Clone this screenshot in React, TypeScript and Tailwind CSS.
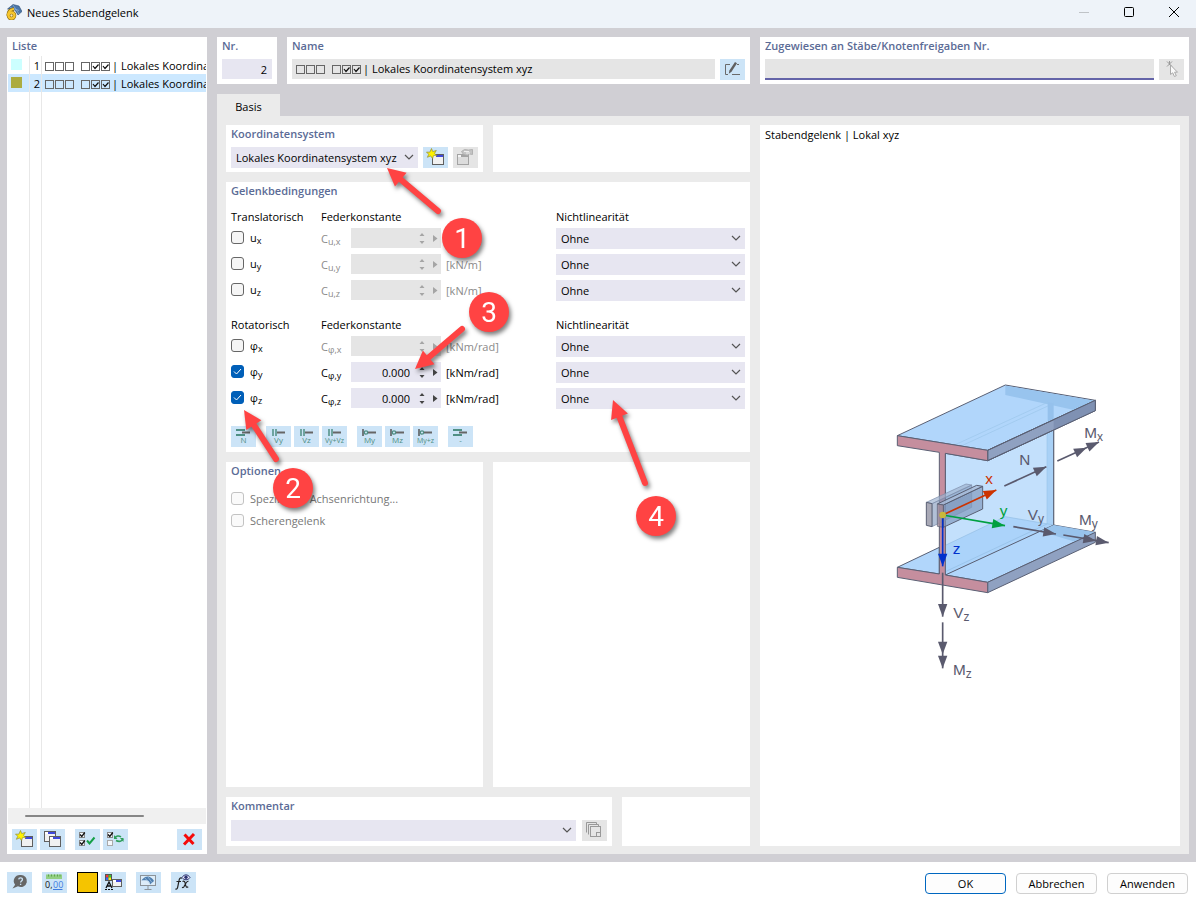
import type { ReactNode } from "react";
import clsx from "clsx";

type Point = [number, number];

const SLATE = "#5a5a6e";

/* ---------- Small icons, all drawn on a 25 x 21 button face ---------- */

const Glyph = ({ children }: { children: ReactNode }) => (
  <svg width="25" height="21" viewBox="0 0 25 21" fill="none" aria-hidden="true">
    {children}
  </svg>
);

const MiniWindow = ({ x, y, w = 11, h = 10, muted = false }: { x: number; y: number; w?: number; h?: number; muted?: boolean }) => (
  <g>
    <rect x={x + 0.5} y={y + 0.5} width={w - 1} height={h - 1} fill={muted ? "#dcdcdc" : "#f1f1f1"} stroke={muted ? "#a3a3a3" : "#5f5f5f"} />
    <rect x={x + 1} y={y + 1} width={w - 2} height="2" fill={muted ? "#f4f4f4" : "#fff"} />
    <rect x={x + 4} y={y + 1} width={w - 5} height="2" fill={muted ? "#a3a3a3" : "#3f49dc"} />
  </g>
);

const NewIcon = () => (
  <Glyph>
    <MiniWindow x={9} y={7} w={12} h={11} />
    <path d="M8.5 1.5l1.2 3 3.6-1-1.8 2.9 2.5 2.4-3.5-.2-.9 2.9-2-2.6-3.2 1.4 1.3-3-2.2-2.2 3.3.1z" fill="#fff200" stroke="#8d8d3c" strokeWidth="0.7" />
  </Glyph>
);

const CopyIcon = () => (
  <Glyph>
    <MiniWindow x={4} y={2} w={12} h={11} />
    <MiniWindow x={9} y={7} w={12} h={11} />
  </Glyph>
);

const EditWindowIcon = () => (
  <Glyph>
    <MiniWindow x={4} y={7} w={12} h={11} muted />
    <path d="M8.500 4.500l3-2 4 .5 4-.5v5l-3-.5-2 1.500-4-1z" fill="#c4c4c4" stroke="#a8a8a8" strokeWidth="0.800" />
    <path d="M11 4.500h5M13 6h4" stroke="#eee" />
  </Glyph>
);

const TickBox = ({ x, y, ticked }: { x: number; y: number; ticked?: boolean }) => (
  <g>
    <rect x={x + 0.5} y={y + 0.5} width="5" height="5" fill="#f4f8fc" stroke={ticked ? "#8a8a8a" : "#aaa"} />
    {ticked && <path d={`M${x + 1} ${y + 2.5}l1.800 2 3-4`} stroke="#111" strokeWidth="1.300" />}
  </g>
);

const SelectAllIcon = () => (
  <Glyph>
    <TickBox x={4} y={3} ticked />
    <TickBox x={4} y={11} ticked />
    <path d="M12 11.500l2.500 3 5-6" stroke="#15a048" strokeWidth="2" />
  </Glyph>
);

const InvertIcon = () => (
  <Glyph>
    <TickBox x={4} y={3} ticked />
    <TickBox x={4} y={11} />
    <path d="M12 9c1-2.500 4-2.500 6-1.200" stroke="#2e9e5b" strokeWidth="1.600" />
    <path d="M20 10c-1 2.500-4 3-7 1.500" stroke="#2e9e5b" strokeWidth="1.600" />
    <path d="M11 6v4h3.500zM20.500 13V9H17z" fill="#2e9e5b" />
  </Glyph>
);

const DeleteIcon = () => (
  <Glyph>
    <path d="M7.500 5.500l9 9.500M17 5l-10 10.500" stroke="#f50a0a" strokeWidth="3" />
  </Glyph>
);

const HelpIcon = () => (
  <Glyph>
    <path d="M13.500 3a6 6 0 1 1-2.500 11.200L5.500 16.500l2.600-3.800A6 6 0 0 1 13.500 3z" fill="#666" />
    <path d="M11.700 7.400c.2-2.200 3.900-2 3.700.2-.1 1.300-1.800 1.400-1.800 2.900M13.600 11.800v1.300" stroke="#cce4f7" strokeWidth="1.300" />
  </Glyph>
);

const UnitsIcon = () => (
  <Glyph>
    <rect x="4" y="2.500" width="16" height="4.500" fill="#92cf83" />
    <path d="M6.500 2.500v2M9.500 2.500v2M12.500 2.500v2M15.500 2.500v2M18 2.500v2" stroke="#5da24e" />
    <text x="3" y="16" fontSize="9" fill="#111">0,</text>
    <text x="11" y="16" fontSize="9" fill="#3d7be0">00</text>
    <path d="M11 17.500h9.500" stroke="#3d7be0" />
  </Glyph>
);

const DisplayIcon = () => (
  <Glyph>
    <rect x="4" y="2" width="7" height="7" fill="#555" />
    <rect x="5" y="3" width="2.500" height="2.500" fill="#f33" />
    <rect x="7.500" y="3" width="2.500" height="2.500" fill="#3c3" />
    <rect x="5" y="5.500" width="2.500" height="2.500" fill="#36f" />
    <rect x="7.500" y="5.500" width="2.500" height="2.500" fill="#fe0" />
    <path d="M5 16l3-6 3 6M6 14h4" stroke="#111" strokeWidth="1.300" />
    <path d="M4 17.500h8" stroke="#111" strokeDasharray="2 1" />
    <MiniWindow x={11} y={7} w={10} h={8} />
  </Glyph>
);

const ScreenIcon = () => (
  <Glyph>
    <rect x="4.500" y="3.500" width="15" height="10" fill="#dcecf8" stroke="#8c9399" />
    <path d="M5.500 8.500C8 5 10 4.500 12.500 4.500c2.500.5 4.500 2.500 5.500 4.500l-4 3.500c0-2-1-3.500-2.500-4-2-.5-4-.5-6 0z" fill="#4f7fb0" />
    <path d="M9 6l5 6M12 5l4 5.500" stroke="#b9d3ea" strokeWidth="0.600" />
    <path d="M12 14v3M8.500 17.500h7" stroke="#8c9399" />
  </Glyph>
);

const FormulaIcon = () => (
  <Glyph>
    <path d="M11 6.200c-2-1-2.700.6-3 2.500l-1.300 6.500c-.3 1.500-1 2.300-2.200 1.700M5.500 9.500h4.500" stroke="#222" strokeWidth="1.200" />
    <path d="M11.500 9.500c2-1 2.500.5 3 3s1 3.500 2.700 2.200M17.500 9.300c-2-.5-3.500 3.500-4.500 5.500-.5.800-1 1-2 .5" stroke="#222" strokeWidth="1.200" />
    <path d="M11 5.500c2-3.500 6-3.500 8 0-2 3-6 3-8 0z" fill="#eef" stroke="#2b3270" />
    <circle cx="15" cy="5.300" r="1.700" fill="#2b3270" />
  </Glyph>
);

const RenameIcon = () => (
  <Glyph>
    <path d="M10 5.500H5.500v10H8M12 15.500h8M17 5.500h2" stroke="#6a6a6a" />
    <path d="M15 3l2 1.300-5.500 8.500-2.700 2 .6-3.200z" fill="#5f5f5f" />
  </Glyph>
);

const PickIcon = () => (
  <Glyph>
    <path d="M8 2.500l5 5M13 2.500l-5 5M10.500 2v4" stroke="#999" />
    <path d="M11.500 6v9.500l2.200-1.700 1.700 3.700 1.900-.8-1.700-3.500h2.900z" fill="#fafafa" stroke="#aaa" />
  </Glyph>
);

const StackIcon = () => (
  <Glyph>
    <path d="M4.500 12.500v-10h10v2M6.500 14.500v-10h10v2" stroke="#999" />
    <rect x="8.500" y="6.500" width="10" height="10" stroke="#999" />
    <rect x="14.500" y="12.500" width="4" height="4" stroke="#999" />
  </Glyph>
);

type HingeKind = "axial" | "shear" | "moment";

const HingeIcon = ({ kind, text }: { kind: HingeKind; text: string }) => (
  <Glyph>
    {kind === "axial" && (
      <>
        <path d="M5 4h9M5 9h9" stroke="#4f8f84" strokeWidth="2" />
        <path d="M11 6.500h8" stroke="#666" strokeWidth="2" />
      </>
    )}
    {kind === "shear" && (
      <>
        <path d="M7 3v7M10 3v7" stroke="#4f8f84" strokeWidth="1.500" />
        <path d="M11 6.500h8" stroke="#666" strokeWidth="2" />
      </>
    )}
    {kind === "moment" && (
      <>
        <path d="M6 3v7" stroke="#555" strokeWidth="1.500" />
        <circle cx="9" cy="6.500" r="1.700" stroke="#4f8f84" strokeWidth="1.300" />
        <path d="M11 6.500h8" stroke="#666" strokeWidth="2" />
      </>
    )}
    <text x="12.500" y="17" textAnchor="middle" fontSize={text.length > 3 ? 7 : 8} fill="#4f8f84">
      {text}
    </text>
  </Glyph>
);

/* ---------- Building blocks ---------- */

const IconButton = ({ label, disabled, children }: { label: string; disabled?: boolean; children: ReactNode }) => (
  <button type="button" aria-label={label} title={label} disabled={disabled} className={clsx("h-[21px] w-[25px] shrink-0", disabled ? "bg-[#e5e5e5]" : "bg-[#cce4f7]")}>
    {children}
  </button>
);

const Panel = ({ className, children }: { className?: string; children?: ReactNode }) => (
  <section className={clsx("bg-white px-[5px]", className)}>{children}</section>
);

const Title = ({ htmlFor, children }: { htmlFor?: string; children: ReactNode }) =>
  htmlFor ? (
    <label htmlFor={htmlFor} className="block h-[19px] truncate font-semibold leading-[18px] text-[#5b6b96]">{children}</label>
  ) : (
    <h2 className="h-[19px] truncate font-semibold leading-[18px] text-[#5b6b96]">{children}</h2>
  );

const Dropdown = ({ id, label, options, className }: { id?: string; label?: string; options: string[]; className?: string }) => (
  <div className={clsx("relative h-[21px] bg-[#e7e6f1]", className)}>
    <select id={id} aria-label={label} className="h-full w-full appearance-none pl-[5px] pr-5 outline-none">
      {options.map((o) => (
        <option key={o}>{o}</option>
      ))}
    </select>
    <svg width="10" height="6" viewBox="0 0 10 6" fill="none" className="pointer-events-none absolute right-1 top-[7px]">
      <path d="M1 1l4 4 4-4" stroke="#555" strokeWidth="1.200" />
    </svg>
  </div>
);

const CheckBox = ({ checked, disabled, children }: { checked?: boolean; disabled?: boolean; children: ReactNode }) => (
  <label className={clsx("flex h-[19px] items-center gap-[6px] self-start", disabled && "text-[#777]")}>
    <span className="grid size-[13px] shrink-0">
      <input
        type="checkbox"
        defaultChecked={checked}
        disabled={disabled}
        className="peer col-start-1 row-start-1 size-[13px] appearance-none rounded-[3px] border border-[#666] bg-[#f5f5f5] checked:border-[#005fb8] checked:bg-[#005fb8] disabled:border-[#c3c3c3] disabled:bg-[#fafafa]"
      />
      <svg width="13" height="13" viewBox="0 0 13 13" fill="none" className="pointer-events-none invisible col-start-1 row-start-1 peer-checked:visible">
        <path d="M3 6.500l2.500 2.500L10 4" stroke="#fff" />
      </svg>
    </span>
    {children}
  </label>
);

/* Three free, one free, two hinged: the pattern that heads every hinge name */
const HingePattern = () => (
  <svg width="66" height="9" viewBox="0 0 66 9" fill="none" className="shrink-0" aria-hidden="true">
    {[0, 10, 20, 36, 46, 56].map((x) => (
      <rect key={x} x={x + 0.5} y="0.500" width="8" height="8" stroke="#666" />
    ))}
    <path d="M48 4l2 2.500 3.500-4M58 4l2 2.500 3.500-4" stroke="#111" strokeWidth="1.200" />
  </svg>
);

const Spinner = ({ label, value, disabled }: { label: string; value: string; disabled?: boolean }) => {
  const fill = disabled ? "#a5a5a5" : "#444";
  return (
    <div className={clsx("flex h-5 w-[90px] self-start", disabled ? "bg-[#e5e5e5]" : "bg-[#e7e6f1]")}>
      <input aria-label={label} defaultValue={value} disabled={disabled} className="h-5 w-[64px] bg-transparent pr-[5px] text-right outline-none" />
      <div className="flex w-[14px] flex-col justify-center gap-[5px]">
        <button type="button" aria-label={`${label} erhöhen`} disabled={disabled}>
          <svg width="14" height="3" viewBox="0 0 14 3"><path d="M7 0l2.500 3h-5z" fill={fill} /></svg>
        </button>
        <button type="button" aria-label={`${label} verringern`} disabled={disabled}>
          <svg width="14" height="3" viewBox="0 0 14 3"><path d="M7 3L4.500 0h5z" fill={fill} /></svg>
        </button>
      </div>
      <button type="button" aria-label={`${label} Optionen`} disabled={disabled} className="w-3">
        <svg width="12" height="7" viewBox="0 0 12 7"><path d="M4 0l4.500 3.500L4 7z" fill={fill} /></svg>
      </button>
    </div>
  );
};

/* ---------- Hinge conditions ---------- */

type Dof = { base: string; axis: string; unit: string; value?: string };

const translations: Dof[] = [
  { base: "u", axis: "x", unit: "[kN/m]" },
  { base: "u", axis: "y", unit: "[kN/m]" },
  { base: "u", axis: "z", unit: "[kN/m]" },
];

const rotations: Dof[] = [
  { base: "φ", axis: "x", unit: "[kNm/rad]" },
  { base: "φ", axis: "y", unit: "[kNm/rad]", value: "0.000" },
  { base: "φ", axis: "z", unit: "[kNm/rad]", value: "0.000" },
];

const DofGroup = ({ title, items }: { title: string; items: Dof[] }) => (
  <div className="flex flex-col gap-px">
    <div className="grid h-5 grid-cols-[90px_235px_1fr] items-center">
      <span>{title}</span>
      <span>Federkonstante</span>
      <span>Nichtlinearität</span>
    </div>
    <div className="flex flex-col gap-[6px]">
      {items.map(({ base, axis, unit, value }) => (
        <div key={axis} className="grid h-5 grid-cols-[90px_30px_95px_110px_1fr] items-center">
          <CheckBox checked={!!value}>
            <span>{base}<sub className="text-[9px]">{axis}</sub></span>
          </CheckBox>
          <span className={clsx(!value && "text-[#8a8a8a]")}>C<sub className="text-[9px]">{base},{axis}</sub></span>
          <Spinner label={`C ${base},${axis}`} value={value ?? ""} disabled={!value} />
          <span className={clsx(!value && "text-[#8a8a8a]")}>{unit}</span>
          <Dropdown label={`Nichtlinearität ${base}${axis}`} options={["Ohne"]} className="self-start" />
        </div>
      ))}
    </div>
  </div>
);

const presets: { kind: HingeKind; text: string }[][] = [
  [{ kind: "axial", text: "N" }],
  [{ kind: "shear", text: "Vy" }, { kind: "shear", text: "Vz" }, { kind: "shear", text: "Vy+Vz" }],
  [{ kind: "moment", text: "My" }, { kind: "moment", text: "Mz" }, { kind: "moment", text: "My+z" }],
  [{ kind: "axial", text: "-" }],
];

/* ---------- Beam drawing ---------- */

const Vector = ({ from, to, inner, color = SLATE }: { from: Point; to: Point; inner?: Point; color?: string }) => {
  const angle = (Math.atan2(to[1] - from[1], to[0] - from[0]) * 180) / Math.PI;
  const head = "M0 0L-38 -14V14z";
  return (
    <g fill={color}>
      <line x1={from[0]} y1={from[1]} x2={to[0]} y2={to[1]} stroke={color} strokeWidth="5" />
      <path d={head} transform={`translate(${to[0]} ${to[1]}) rotate(${angle})`} />
      {inner && <path d={head} transform={`translate(${inner[0]} ${inner[1]}) rotate(${angle})`} />}
    </g>
  );
};

const BeamLabel = ({ x, y, text, sub, color = SLATE }: { x: number; y: number; text: string; sub?: string; color?: string }) => (
  <text x={x} y={y} fontSize="46" fill={color}>
    {text}
    {sub && <tspan fontSize="36" dy="9">{sub}</tspan>}
  </text>
);

const BeamDrawing = () => (
  <svg width="240" height="320" viewBox="0 0 720 960" className="font-['Liberation_Sans',Arial,sans-serif]" role="img" aria-label="Stabendgelenk">
    <g stroke="#5a6074" strokeWidth="3" strokeLinejoin="round">
      {/* web */}
      <path d="M196 250L323 272L521 180V465L196 615z" fill="#c3e0fc" />
      <path d="M501 188L521 180V465L501 462z" fill="#a9d1f6" stroke="none" />
      <path d="M501 188V462" stroke="#9cc5ea" strokeWidth="2" />
      <path d="M521 180V465" />
      {/* bottom flange */}
      <path d="M52 592L178 532V612z" fill="#b1d6fb" />
      <path d="M196 526L376 440L521 465L196 615z" fill="#abd3fa" stroke="none" />
      <path d="M196 526L376 440L521 465M196 605L501 462" fill="none" stroke="#93bce3" strokeWidth="2" />
      <path d="M196 615L521 465L646 487L323 637z" fill="#b1d6fb" />
      <path d="M521 465L646 487L585 515L480 484z" fill="#98c3ec" stroke="none" />
      <path d="M323 637L646 487V517L323 668z" fill="#8fa1c1" />
      {/* top flange */}
      <path d="M52 197L376 45L646 91L323 241z" fill="#b1d6fb" />
      <path d="M376 47L643 92L582 120L376 75z" fill="#98c4ee" stroke="none" />
      <path d="M503 97L228 223M521 100L248 226" stroke="#9cc5ea" strokeWidth="2" />
      <path d="M503 97L521 100V148L503 156z" fill="#95c1ec" stroke="none" />
      <path d="M323 241L646 91V122L323 272z" fill="#8fa1c1" />
      <path d="M521 150L646 91V122L521 180z" fill="#7f91b3" stroke="none" />
      <path d="M323 241L646 91V122L323 272z" fill="none" />
      {/* cut section */}
      <path d="M52 197L323 241V272L196 250V615L323 637V668L52 622V592L178 612V247L52 227z" fill="#c58e9e" />
      {/* hinge plates */}
      <path d="M156 401L275 345V412L156 470z" fill="#7e96bb" fillOpacity="0.600" stroke="#7b8ba8" strokeWidth="2" />
      <path d="M139 397L258 342L275 345L156 401z" fill="#9fb3d0" fillOpacity="0.700" stroke="#7b8ba8" strokeWidth="2" />
      <path d="M139 397L156 401V470L139 466z" fill="#a9a9b6" />
      <path d="M190 405L308 349V417L190 472z" fill="#7e96bb" fillOpacity="0.650" />
      <path d="M172 402L290 346L308 349L190 405z" fill="#a8bcd8" fillOpacity="0.800" />
      <path d="M172 402L190 405V472L172 469z" fill="#a08a98" fillOpacity="0.800" strokeWidth="2" />
    </g>
    <Vector from={[188, 435]} to={[349, 360]} color="#cc3300" />
    <Vector from={[188, 435]} to={[375, 467]} color="#00a040" />
    <Vector from={[188, 435]} to={[188, 589]} color="#0030cc" />
    <circle cx="188" cy="435" r="10" fill="#c9b83a" />
    <Vector from={[373, 348]} to={[499, 290]} />
    <Vector from={[532, 273]} to={[657, 216]} inner={[620, 233]} />
    <Vector from={[400, 470]} to={[528, 492]} />
    <Vector from={[550, 495]} to={[686, 518]} inner={[648, 512]} />
    <Vector from={[188, 608]} to={[188, 740]} />
    <Vector from={[188, 757]} to={[188, 895]} inner={[188, 853]} />
    <BeamLabel x={613} y={205} text="M" sub="x" />
    <BeamLabel x={418} y={285} text="N" />
    <BeamLabel x={316} y={343} text="x" color="#cc3300" />
    <BeamLabel x={359} y={437} text="y" color="#00a040" />
    <BeamLabel x={443} y={451} text="V" sub="y" />
    <BeamLabel x={597} y={466} text="M" sub="y" />
    <BeamLabel x={218} y={552} text="z" color="#0030cc" />
    <BeamLabel x={220} y={743} text="V" sub="z" />
    <BeamLabel x={219} y={914} text="M" sub="z" />
  </svg>
);

/* ---------- Numbered callouts over the form ---------- */

const callouts: { n: number; at: Point; tail: Point; tip: Point }[] = [
  { n: 1, at: [236, 113], tail: [212, 86], tip: [161, 43] },
  { n: 2, at: [67, 363], tail: [50, 334], tip: [18, 285] },
  { n: 3, at: [263, 187], tail: [236, 204], tip: [189, 244] },
  { n: 4, at: [430, 391], tail: [419, 358], tip: [387, 275] },
];

const Callouts = () => (
  <svg width="524" height="425" viewBox="0 0 524 425" className="pointer-events-none absolute left-0 top-0 font-[Roboto,Arial,sans-serif] [filter:drop-shadow(2px_3px_2px_rgba(0,0,0,0.5))]">
    {callouts.map(({ n, at, tail, tip }) => {
      const dx = tip[0] - tail[0];
      const dy = tip[1] - tail[1];
      const len = Math.hypot(dx, dy);
      const angle = (Math.atan2(dy, dx) * 180) / Math.PI;
      return (
        <g key={n} fill="#ff4343">
          <line x1={tail[0]} y1={tail[1]} x2={tip[0] - (dx / len) * 14} y2={tip[1] - (dy / len) * 14} stroke="#ff4343" strokeWidth="6" strokeLinecap="round" />
          <path d="M0 0L-18 -9V9z" transform={`translate(${tip[0]} ${tip[1]}) rotate(${angle})`} />
          <circle cx={at[0]} cy={at[1]} r="20" />
          <text x={at[0]} y={at[1] + 10} textAnchor="middle" fontSize="28" fill="#fff">{n}</text>
        </g>
      );
    })}
  </svg>
);

const hinges = [
  { nr: 1, color: "bg-[#ccffff]" },
  { nr: 2, color: "bg-[#acac40]", selected: true },
];

const HingeList = () => (
  <aside className="flex w-[200px] shrink-0 flex-col bg-white">
    <div className="px-[5px]"><Title>Liste</Title></div>
    <div className="flex flex-1 flex-col px-px">
      <ul>
        {hinges.map(({ nr, color, selected }) => (
          <li key={nr}>
            <button type="button" className={clsx("grid h-[18px] w-full grid-cols-[22px_12px_1fr] overflow-hidden text-left", selected && "bg-[#cce8ff]")}>
              <span className="h-full border-r border-[#e8e8e8] pl-[3px] pt-[3px]"><span className={clsx("block size-[11px]", color)} /></span>
              <span className="h-full border-r border-[#e8e8e8] pr-px text-right leading-5">{nr}</span>
              <span className="flex h-5 min-w-0 items-center gap-px overflow-hidden whitespace-nowrap pl-[3px]">
                <HingePattern />
                <span>| Lokales Koordinatensystem xyz</span>
              </span>
            </button>
          </li>
        ))}
      </ul>
      <div className="grid flex-1 grid-cols-[22px_12px_1fr]">
        <span className="border-r border-[#e8e8e8]" />
        <span className="border-r border-[#e8e8e8]" />
      </div>
      <div className="h-4 bg-[#f0f0f0] pl-[17px] pt-[7px]">
        <div className="h-[2px] w-[119px] rounded-full bg-[#868686]" />
      </div>
    </div>
    <div className="flex gap-[3px] px-[5px] pb-1 pt-[5px]">
      <IconButton label="Neu"><NewIcon /></IconButton>
      <IconButton label="Kopieren"><CopyIcon /></IconButton>
      <div className="ml-[7px] flex flex-1 gap-[3px]">
        <IconButton label="Alle auswählen"><SelectAllIcon /></IconButton>
        <IconButton label="Auswahl umkehren"><InvertIcon /></IconButton>
      </div>
      <IconButton label="Löschen"><DeleteIcon /></IconButton>
    </div>
  </aside>
);

const dialogButtons = ["OK", "Abbrechen", "Anwenden"];

const App = () => (
  <div className="flex min-h-screen flex-col bg-white font-['Open_Sans','Noto_Sans',sans-serif] text-[11px] leading-4 text-black">
    <header className="flex h-7 items-start bg-[#eef3f9] pl-[6px]">
      <svg width="16" height="16" viewBox="0 0 16 16" fill="none" className="mt-1">
        <path d="M1.500 5L7 .5l6 1.500 3 5.500-4 3.500-3-5-4-1z" fill="#4c77a8" stroke="#2f4f77" strokeWidth="0.600" />
        <path d="M4 3.500l9 3M7 1l6 9" stroke="#9ec0e0" strokeWidth="0.600" />
        <path d="M8 5C4.500 5.500 2.200 8 2.200 11.500" stroke="#8a6a10" strokeWidth="3.600" />
        <circle cx="5.500" cy="11.500" r="3" fill="#fbe9b0" stroke="#8a6a10" strokeWidth="3.600" />
        <path d="M8 5C4.500 5.500 2.200 8 2.200 11.500" stroke="#f6c62f" strokeWidth="2.200" />
        <circle cx="5.500" cy="11.500" r="3" stroke="#f6c62f" strokeWidth="2.400" />
      </svg>
      <h1 className="ml-[5px] flex-1 leading-[26px]">Neues Stabendgelenk</h1>
      <div className="flex">
        <button type="button" aria-label="Minimieren" disabled className="grid h-6 w-[45px] place-items-center">
          <svg width="10" height="10" viewBox="0 0 10 10"><path d="M0 5.500h10" stroke="#bfc3c7" /></svg>
        </button>
        <button type="button" aria-label="Maximieren" className="grid h-6 w-[45px] place-items-center">
          <svg width="10" height="10" viewBox="0 0 10 10" fill="none"><rect x="0.500" y="0.500" width="9" height="9" rx="1" stroke="#000" /></svg>
        </button>
        <button type="button" aria-label="Schließen" className="grid h-6 w-[45px] place-items-center">
          <svg width="10" height="10" viewBox="0 0 10 10"><path d="M0 0l10 10M10 0L0 10" stroke="#000" /></svg>
        </button>
      </div>
    </header>

    <main className="flex flex-1 gap-[10px] bg-[#d0cfd4] px-[7px] pb-2 pt-[9px]">
      <HingeList />

      <div className="flex min-w-0 flex-1 flex-col">
        {/* Number, name and assignment */}
        <div className="flex gap-[10px]">
          <Panel className="w-[60px] shrink-0 pb-1">
            <Title htmlFor="nr">Nr.</Title>
            <input id="nr" defaultValue="2" className="mt-[3px] block h-5 w-full bg-[#e7e6f1] px-[5px] text-right outline-none" />
          </Panel>
          <Panel className="w-[463px] shrink-0 pb-1">
            <Title htmlFor="name">Name</Title>
            <div className="mt-[3px] flex gap-[5px]">
              <div className="flex h-5 flex-1 items-center gap-px bg-[#e5e5e5] pl-1">
                <HingePattern />
                <input id="name" readOnly value="| Lokales Koordinatensystem xyz" className="min-w-0 flex-1 bg-transparent outline-none" />
              </div>
              <IconButton label="Name bearbeiten"><RenameIcon /></IconButton>
            </div>
          </Panel>
          <Panel className="min-w-0 flex-1 pb-1">
            <Title htmlFor="assigned">Zugewiesen an Stäbe/Knotenfreigaben Nr.</Title>
            <div className="mt-[3px] flex gap-[5px]">
              <input id="assigned" className="h-[21px] min-w-0 flex-1 border-b-2 border-[#6464a8] bg-[#e5e5e5] px-[5px] outline-none" />
              <IconButton label="Auswählen" disabled><PickIcon /></IconButton>
            </div>
          </Panel>
        </div>

        <div role="tablist" className="mt-[10px] flex">
          <button type="button" role="tab" aria-selected="true" className="h-[22px] w-[63px] bg-[#ebebeb] pt-1">Basis</button>
        </div>

        <div className="flex flex-1 gap-[10px] bg-[#ebebeb] px-[9px] pb-2 pt-[9px]">
          <div className="relative flex w-[524px] shrink-0 flex-col gap-[10px]">
            <div className="grid grid-cols-2 gap-[10px]">
              <Panel className="pb-1">
                <Title htmlFor="cs">Koordinatensystem</Title>
                <div className="mt-[3px] flex gap-[5px]">
                  <Dropdown id="cs" options={["Lokales Koordinatensystem xyz"]} className="flex-1" />
                  <IconButton label="Neues Koordinatensystem"><NewIcon /></IconButton>
                  <IconButton label="Koordinatensystem bearbeiten" disabled><EditWindowIcon /></IconButton>
                </div>
              </Panel>
              <Panel />
            </div>

            <Panel className="pb-[5px]">
              <Title>Gelenkbedingungen</Title>
              <div className="mt-[6px] flex flex-col gap-[15px]">
                <DofGroup title="Translatorisch" items={translations} />
                <DofGroup title="Rotatorisch" items={rotations} />
              </div>
              <div className="mt-[18px] flex gap-[10px]">
                {presets.map((group, i) => (
                  <div key={i} className="flex gap-[3px]">
                    {group.map(({ kind, text }) => (
                      <IconButton key={text} label={`Gelenk ${text}`}><HingeIcon kind={kind} text={text} /></IconButton>
                    ))}
                  </div>
                ))}
              </div>
            </Panel>

            <div className="grid flex-1 grid-cols-2 gap-[10px]">
              <Panel>
                <Title>Optionen</Title>
                <div className="mt-2 flex flex-col gap-[3px]">
                  <CheckBox disabled>Spezifische Achsenrichtung...</CheckBox>
                  <CheckBox disabled>Scherengelenk</CheckBox>
                </div>
              </Panel>
              <Panel />
            </div>

            <div className="flex gap-[10px]">
              <Panel className="flex-1 pb-[5px]">
                <Title htmlFor="comment">Kommentar</Title>
                <div className="mt-1 flex gap-[6px]">
                  <Dropdown id="comment" options={[""]} className="flex-1" />
                  <IconButton label="Kommentare" disabled><StackIcon /></IconButton>
                </div>
              </Panel>
              <Panel className="w-[128px]" />
            </div>

            <Callouts />
          </div>

          <Panel className="flex min-w-0 flex-1 flex-col">
            <h2 className="h-5 leading-5">Stabendgelenk | Lokal xyz</h2>
            <div className="flex flex-1 items-center justify-center pl-[60px] pt-[68px]">
              <BeamDrawing />
            </div>
          </Panel>
        </div>
      </div>
    </main>

    <footer className="flex h-[35px] items-start pl-[7px] pr-2 pt-[10px]">
      <div className="flex flex-1 gap-[10px]">
        <IconButton label="Hilfe"><HelpIcon /></IconButton>
        <IconButton label="Einheiten"><UnitsIcon /></IconButton>
        <div className="flex gap-[3px]">
          <button type="button" aria-label="Farbe" className="size-[21px] border border-black bg-[#f5c400]" />
          <IconButton label="Darstellung"><DisplayIcon /></IconButton>
        </div>
        <IconButton label="Ansicht"><ScreenIcon /></IconButton>
        <IconButton label="Formel"><FormulaIcon /></IconButton>
      </div>
      <div className="flex gap-[10px] pt-px">
        {dialogButtons.map((name, i) => (
          <button key={name} type="button" className={clsx("h-[21px] w-[81px] rounded-[4px] border bg-[#fdfdfd]", i === 0 ? "border-[#0067c0]" : "border-[#d0d0d0]")}>
            {name}
          </button>
        ))}
      </div>
    </footer>
  </div>
);

export default App;
